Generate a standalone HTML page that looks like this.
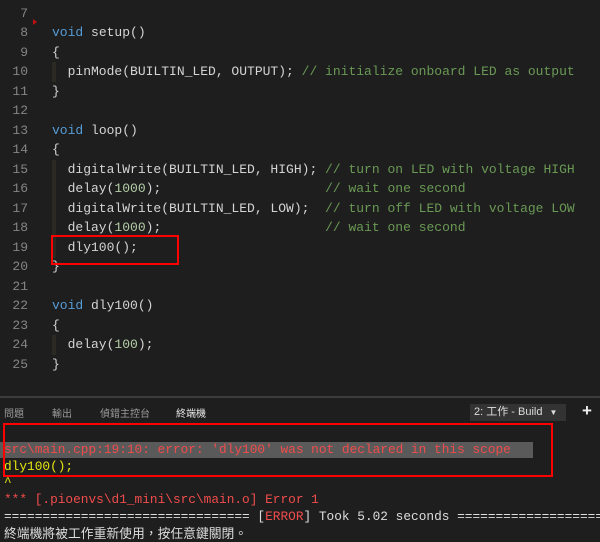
<!DOCTYPE html><html><head><style>
body{margin:0;width:600px;height:532px;background:#1e1e1e;overflow:hidden;position:relative;font-family:"Liberation Mono",monospace;font-size:13px;color:#d4d4d4}
.l{position:absolute;left:0;width:600px;height:19px;line-height:19px;white-space:pre;overflow:hidden}
.n{position:absolute;right:572px;color:#858585;text-align:right}
.c{position:absolute;left:52px}
.k{color:#569cd6}.m{color:#b5cea8}.g{color:#6a9955}
.ig{position:absolute;left:52px;width:4px;background:#2a2a22}
.t{position:absolute;left:4px;width:596px;overflow:hidden;white-space:pre;line-height:17px;height:17px;font-size:12.8px}
.tab{position:absolute;top:405px;font-family:"Liberation Sans","Noto Sans CJK TC",sans-serif;font-size:10px;color:#999}
</style></head><body>
<div style="position:absolute;left:33px;top:19px;width:0;height:0;border-left:4px solid #c01010;border-top:3px solid transparent;border-bottom:3px solid transparent"></div>
<div class="ig" style="top:62px;height:20px"></div>
<div class="ig" style="top:160px;height:98px"></div>
<div class="ig" style="top:335px;height:20px"></div>
<div class="l" style="top:4px"><span class="n">7</span></div>
<div class="l" style="top:23px"><span class="n">8</span><span class="c"><span class="k">void</span> setup()</span></div>
<div class="l" style="top:43px"><span class="n">9</span><span class="c">{</span></div>
<div class="l" style="top:62px"><span class="n">10</span><span class="c">  pinMode(BUILTIN_LED, OUTPUT); <span class="g">// initialize onboard LED as output</span></span></div>
<div class="l" style="top:82px"><span class="n">11</span><span class="c">}</span></div>
<div class="l" style="top:101px"><span class="n">12</span></div>
<div class="l" style="top:121px"><span class="n">13</span><span class="c"><span class="k">void</span> loop()</span></div>
<div class="l" style="top:140px"><span class="n">14</span><span class="c">{</span></div>
<div class="l" style="top:160px"><span class="n">15</span><span class="c">  digitalWrite(BUILTIN_LED, HIGH); <span class="g">// turn on LED with voltage HIGH</span></span></div>
<div class="l" style="top:179px"><span class="n">16</span><span class="c">  delay(<span class="m">1000</span>);                     <span class="g">// wait one second</span></span></div>
<div class="l" style="top:199px"><span class="n">17</span><span class="c">  digitalWrite(BUILTIN_LED, LOW);  <span class="g">// turn off LED with voltage LOW</span></span></div>
<div class="l" style="top:218px"><span class="n">18</span><span class="c">  delay(<span class="m">1000</span>);                     <span class="g">// wait one second</span></span></div>
<div class="l" style="top:238px"><span class="n">19</span><span class="c">  dly100();</span></div>
<div class="l" style="top:257px"><span class="n">20</span><span class="c">}</span></div>
<div class="l" style="top:277px"><span class="n">21</span></div>
<div class="l" style="top:296px"><span class="n">22</span><span class="c"><span class="k">void</span> dly100()</span></div>
<div class="l" style="top:316px"><span class="n">23</span><span class="c">{</span></div>
<div class="l" style="top:335px"><span class="n">24</span><span class="c">  delay(<span class="m">100</span>);</span></div>
<div class="l" style="top:355px"><span class="n">25</span><span class="c">}</span></div>
<div style="position:absolute;left:51px;top:235px;width:124px;height:26px;border:2px solid #f00"></div>
<div style="position:absolute;left:0;top:396px;width:600px;height:2px;background:#3c3c3c"></div>
<div class="tab" style="left:4px">問題</div>
<div class="tab" style="left:52px">輸出</div>
<div class="tab" style="left:100px">偵錯主控台</div>
<div class="tab" style="left:176px;color:#e7e7e7">終端機</div>
<div style="position:absolute;left:470px;top:404px;width:96px;height:17px;background:#333;color:#ddd;font-family:'Liberation Sans','Noto Sans CJK TC',sans-serif;font-size:11px;line-height:17px;padding-left:4px;box-sizing:border-box">2: 工作 - Build <span style="font-size:8px;margin-left:4px">▼</span></div>
<div style="position:absolute;left:582px;top:401px;color:#eee;font:bold 17px 'Liberation Sans',sans-serif">+</div>
<div style="position:absolute;left:0;top:442px;width:533px;height:16px;background:#5a5a5a"></div>
<div class="t" style="top:441px;color:#f14c4c">src\main.cpp:19:10: error: 'dly100' was not declared in this scope</div>
<div class="t" style="top:458px;color:#e5e510">dly100();</div>
<div class="t" style="top:474px;color:#e5e510">^</div>
<div class="t" style="top:491px;color:#f14c4c">*** [.pioenvs\d1_mini\src\main.o] Error 1</div>
<div class="t" style="top:508px;color:#ddd">================================ [<span style="color:#f14c4c">ERROR</span>] Took 5.02 seconds =====================</div>
<div class="t" style="top:525px;color:#ddd;font-family:'Liberation Sans','Noto Sans CJK TC',sans-serif">終端機將被工作重新使用，按任意鍵關閉。</div>
<div style="position:absolute;left:3px;top:423px;width:546px;height:50px;border:2px solid #f00"></div>
</body></html>
